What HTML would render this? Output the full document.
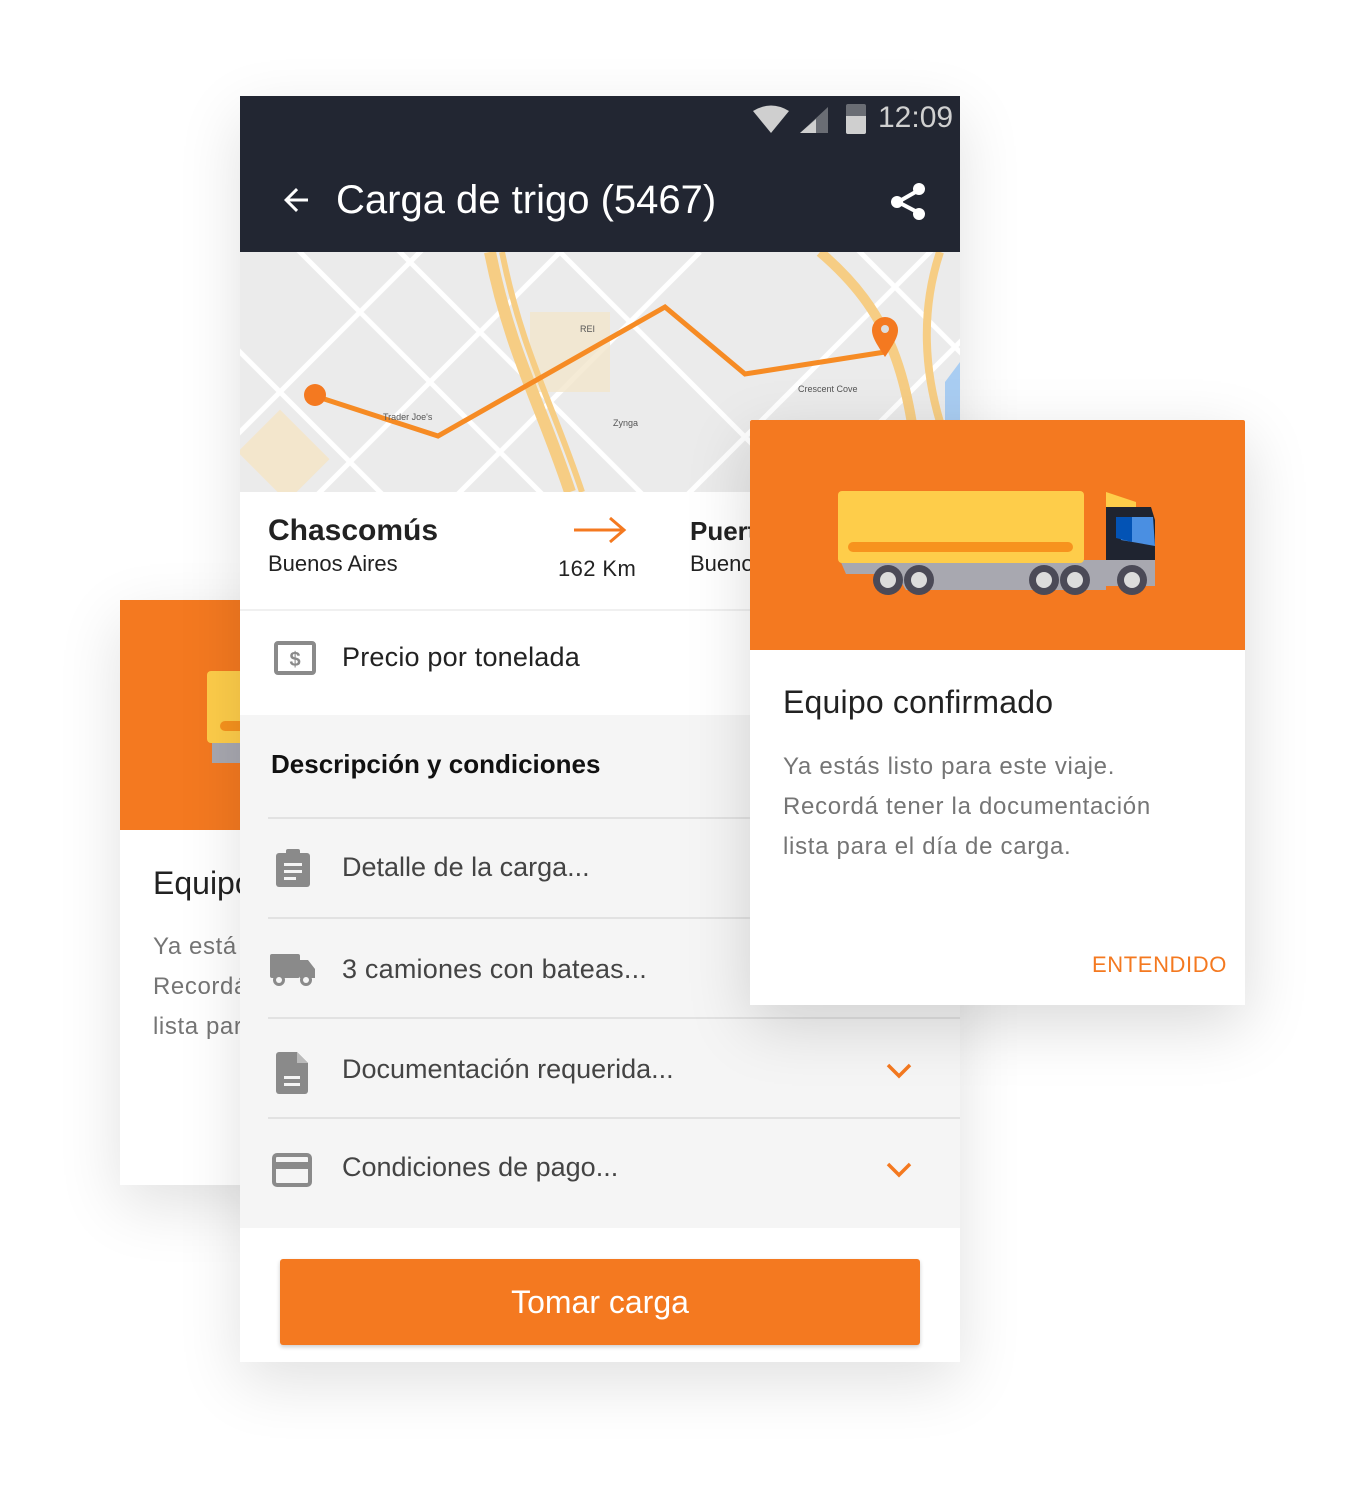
<!DOCTYPE html>
<html><head><meta charset="utf-8"><style>
*{margin:0;padding:0;box-sizing:border-box}
body{width:1365px;height:1506px;background:#fff;position:relative;overflow:hidden;font-family:"Liberation Sans",Roboto,sans-serif}
.abs{position:absolute}
.card{background:#fff;box-shadow:0 20px 60px rgba(0,0,0,.12)}
.t{position:absolute;white-space:nowrap}
.sep{position:absolute;left:268px;width:692px;height:2px;background:#e2e2e2}
</style></head><body>

<div class="abs card" style="left:120px;top:600px;width:300px;height:585px">
  <div class="abs" style="left:0;top:0;width:300px;height:230px;background:#f47920"></div>
  <div class="abs" style="left:87px;top:71px;width:60px;height:72px;background:#fecd4a;border-radius:4px"></div>
  <div class="abs" style="left:100px;top:121px;width:40px;height:10px;background:#f7931e;border-radius:5px"></div>
  <div class="abs" style="left:92px;top:143px;width:40px;height:20px;background:#a8a8b0"></div>
  <div class="t" style="left:33px;top:265px;font-size:32px;color:#222">Equipo</div>
  <div class="t" style="left:33px;top:327px;font-size:24px;color:#757575;line-height:40px;letter-spacing:.6px">Ya está<br>Recordá<br>lista para</div>
</div>

<div class="abs card" style="left:240px;top:96px;width:720px;height:1266px;background:#f5f5f5;overflow:hidden">
  <div class="abs" style="left:0;top:0;width:720px;height:156px;background:#222632"></div>
  <svg class="abs" style="left:510px;top:6px" width="100" height="34" viewBox="0 0 100 34">
    <path d="M3 9 Q21 -2 39 9 L21 31Z" fill="#cfcfcf"/>
    <path d="M50 31 L78 5 V31Z" fill="#6a6d74"/><path d="M50 31 L66 17 V31Z" fill="#cfcfcf"/>
  </svg>
  <div class="abs" style="left:606px;top:8px;width:20px;height:30px;background:#6a6d74;border-radius:2px"></div>
  <div class="abs" style="left:606px;top:20px;width:20px;height:18px;background:#cfcfcf;border-radius:0 0 2px 2px"></div>
  <div class="t" style="left:638px;top:5px;font-size:30px;color:#d0d0d0">12:09</div>
  <svg class="abs" style="left:38px;top:86px" width="36" height="36" viewBox="0 0 24 24"><path d="M20 11H7.8l5.6-5.6L12 4l-8 8 8 8 1.4-1.4L7.8 13H20z" fill="#fff"/></svg>
  <div class="t" style="left:96px;top:82px;font-size:40px;color:#fff">Carga de trigo (5467)</div>
  <svg class="abs" style="left:648px;top:84px" width="40" height="42" viewBox="0 0 40 42"><g stroke="#fff" stroke-width="4"><line x1="10" y1="22" x2="31" y2="10"/><line x1="10" y1="22" x2="31" y2="33"/></g><g fill="#fff"><circle cx="9" cy="22" r="6"/><circle cx="31" cy="9" r="6"/><circle cx="31" cy="34" r="6"/></g></svg>

  <svg class="abs" style="left:0;top:156px" width="720" height="240" viewBox="0 0 720 240">
    <rect width="720" height="240" fill="#ebebeb"/>
    <g stroke="#fff" stroke-width="5">
      <line x1="-40" y1="60" x2="200" y2="300"/><line x1="40" y1="-20" x2="320" y2="260"/><line x1="140" y1="-20" x2="420" y2="260"/>
      <line x1="-20" y1="200" x2="200" y2="-20"/><line x1="60" y1="260" x2="320" y2="0"/><line x1="200" y1="260" x2="460" y2="0"/>
      <line x1="300" y1="-20" x2="560" y2="240"/><line x1="430" y1="260" x2="700" y2="-10"/><line x1="560" y1="250" x2="800" y2="10"/>
      <line x1="600" y1="-20" x2="760" y2="140"/>
    </g>
    <rect x="10" y="170" width="60" height="70" fill="#f3e6cc" transform="rotate(-45 40 200)"/>
    <rect x="290" y="60" width="80" height="80" fill="#f3e6cc" opacity=".8"/>
    <path d="M250 0 C270 100 300 150 330 240" stroke="#f6cd84" stroke-width="12" fill="none"/>
    <path d="M262 0 C282 100 312 150 342 240" stroke="#f6cd84" stroke-width="6" fill="none"/>
    <path d="M580 0 C650 60 670 120 680 240" stroke="#f6cd84" stroke-width="10" fill="none"/>
    <path d="M700 0 C680 60 685 120 700 170" stroke="#f6cd84" stroke-width="8" fill="none"/>
    <path d="M705 130 L720 110 V170 H705Z" fill="#a9cdf2"/>
    <polyline points="75,144 198,184 425,55 505,122 645,100" fill="none" stroke="#f68b24" stroke-width="5"/>
    <circle cx="75" cy="143" r="11" fill="#f47920"/>
    <path d="M645 105 C635 90 632 84 632 78 A13 13 0 0 1 658 78 C658 84 655 90 645 105Z" fill="#f47920"/><circle cx="645" cy="77" r="4" fill="#ddd"/>
    <g font-family="Liberation Sans" font-size="9" fill="#555"><text x="340" y="80">REI</text><text x="143" y="168">Trader Joe's</text><text x="373" y="174">Zynga</text><text x="558" y="140">Crescent Cove</text></g>
  </svg>

  <div class="abs" style="left:0;top:396px;width:720px;height:117px;background:#fff"></div>
  <div class="t" style="left:28px;top:418px;font-size:30px;font-weight:bold;color:#222">Chascomús</div>
  <div class="t" style="left:28px;top:455px;font-size:22px;color:#222">Buenos Aires</div>
  <svg class="abs" style="left:332px;top:418px" width="56" height="32" viewBox="0 0 56 32"><path d="M2 16H50M38 4L52 16 38 28" stroke="#f47920" stroke-width="3" fill="none"/></svg>
  <div class="t" style="left:318px;top:460px;font-size:22px;color:#222;letter-spacing:.4px">162 Km</div>
  <div class="t" style="left:450px;top:420px;font-size:26px;font-weight:bold;color:#222">Puerto</div>
  <div class="t" style="left:450px;top:455px;font-size:22px;color:#222">Buenos</div>
  <div class="abs" style="left:0;top:513px;width:720px;height:106px;background:#fff;border-top:2px solid #f0f0f0"></div>
  <svg class="abs" style="left:34px;top:545px" width="42" height="34" viewBox="0 0 42 34"><rect x="2" y="2" width="38" height="30" rx="2" fill="none" stroke="#8a8a8a" stroke-width="4"/><text x="21" y="25" text-anchor="middle" font-family="Liberation Sans" font-weight="bold" font-size="20" fill="#8a8a8a">$</text></svg>
  <div class="t" style="left:102px;top:546px;font-size:27px;color:#222;letter-spacing:.2px">Precio por tonelada</div>

  <div class="t" style="left:31px;top:653px;font-size:26px;font-weight:bold;color:#111">Descripción y condiciones</div>
  <div class="sep" style="left:28px;top:721px"></div>
  <svg class="abs" style="left:34px;top:752px" width="38" height="40" viewBox="0 0 38 40"><rect x="2" y="5" width="34" height="34" rx="3" fill="#8a8a8a"/><rect x="12" y="1" width="14" height="8" rx="2" fill="#8a8a8a"/><g fill="#f5f5f5"><rect x="10" y="15" width="18" height="3"/><rect x="10" y="22" width="18" height="3"/><rect x="10" y="29" width="12" height="3"/></g></svg>
  <div class="t" style="left:102px;top:756px;font-size:27px;color:#444">Detalle de la carga...</div>
  <div class="sep" style="left:28px;top:821px"></div>
  <svg class="abs" style="left:30px;top:858px" width="46" height="34" viewBox="0 0 46 34"><rect x="0" y="0" width="30" height="24" rx="2" fill="#8a8a8a"/><path d="M30 6H38L45 15V24H30Z" fill="#8a8a8a"/><circle cx="9" cy="26" r="6" fill="#8a8a8a"/><circle cx="9" cy="26" r="3" fill="#f5f5f5"/><circle cx="36" cy="26" r="6" fill="#8a8a8a"/><circle cx="36" cy="26" r="3" fill="#f5f5f5"/></svg>
  <div class="t" style="left:102px;top:858px;font-size:27px;color:#444;letter-spacing:.2px">3 camiones con bateas...</div>
  <div class="sep" style="left:28px;top:921px"></div>
  <svg class="abs" style="left:36px;top:956px" width="32" height="42" viewBox="0 0 32 42"><path d="M3 0H21L32 11V39A3 3 0 0 1 29 42H3A3 3 0 0 1 0 39V3A3 3 0 0 1 3 0Z" fill="#8a8a8a"/><path d="M21 0V11H32" fill="#bbb"/><g fill="#f5f5f5"><rect x="8" y="24" width="16" height="3"/><rect x="8" y="31" width="16" height="3"/></g></svg>
  <div class="t" style="left:102px;top:958px;font-size:27px;color:#444">Documentación requerida...</div>
  <svg class="abs" style="left:646px;top:966px" width="26" height="18" viewBox="0 0 26 18"><path d="M2 3L13 14 24 3" stroke="#f47920" stroke-width="3.5" fill="none"/></svg>
  <div class="sep" style="left:28px;top:1021px"></div>
  <svg class="abs" style="left:32px;top:1057px" width="40" height="34" viewBox="0 0 40 34"><rect x="2" y="2" width="36" height="30" rx="3" fill="none" stroke="#8a8a8a" stroke-width="4"/><rect x="2" y="9" width="36" height="7" fill="#8a8a8a"/></svg>
  <div class="t" style="left:102px;top:1056px;font-size:27px;color:#444">Condiciones de pago...</div>
  <svg class="abs" style="left:646px;top:1065px" width="26" height="18" viewBox="0 0 26 18"><path d="M2 3L13 14 24 3" stroke="#f47920" stroke-width="3.5" fill="none"/></svg>

  <div class="abs" style="left:0;top:1132px;width:720px;height:134px;background:#fff"></div>
  <div class="abs" style="left:40px;top:1163px;width:640px;height:86px;background:#f47920;border-radius:3px;box-shadow:0 2px 4px rgba(0,0,0,.2);color:#fff;font-size:32px;text-align:center;line-height:86px">Tomar carga</div>
</div>

<div class="abs card" style="left:750px;top:420px;width:495px;height:585px;box-shadow:0 20px 60px rgba(0,0,0,.15)">
  <div class="abs" style="left:0;top:0;width:495px;height:230px;background:#f47920;border-radius:2px 2px 0 0"></div>
  <svg class="abs" style="left:86px;top:70px" width="325" height="106" viewBox="0 0 325 106">
    <path d="M4 70H270V100H70L60 84H10Z" fill="#a8a8b0"/>
    <rect x="2" y="1" width="246" height="72" rx="4" fill="#fecd4a"/>
    <rect x="12" y="52" width="225" height="10" rx="5" fill="#f7931e"/>
    <path d="M270 2L300 12V70H270Z" fill="#fecd4a"/>
    <path d="M270 17H315L319 30V70H270Z" fill="#1f2430"/>
    <path d="M280 27H317L319 56L285 50Z" fill="#4a8fe2"/><path d="M280 27H296V52L280 48Z" fill="#0353b5"/>
    <rect x="270" y="70" width="49" height="26" fill="#a8a8b0"/>
    <g fill="#4b4a57"><circle cx="52" cy="90" r="15"/><circle cx="83" cy="90" r="15"/><circle cx="208" cy="90" r="15"/><circle cx="239" cy="90" r="15"/><circle cx="296" cy="90" r="15"/></g>
    <g fill="#dcdcdc"><circle cx="52" cy="90" r="8"/><circle cx="83" cy="90" r="8"/><circle cx="208" cy="90" r="8"/><circle cx="239" cy="90" r="8"/><circle cx="296" cy="90" r="8"/></g>
  </svg>
  <div class="t" style="left:33px;top:264px;font-size:32px;color:#222;letter-spacing:.2px">Equipo confirmado</div>
  <div class="t" style="left:33px;top:327px;font-size:24px;color:#757575;line-height:40px;letter-spacing:.7px">Ya estás listo para este viaje.<br>Recordá tener la documentación<br>lista para el día de carga.</div>
  <div class="t" style="left:342px;top:532px;font-size:22px;color:#f47920;letter-spacing:.6px">ENTENDIDO</div>
</div>
</body></html>
